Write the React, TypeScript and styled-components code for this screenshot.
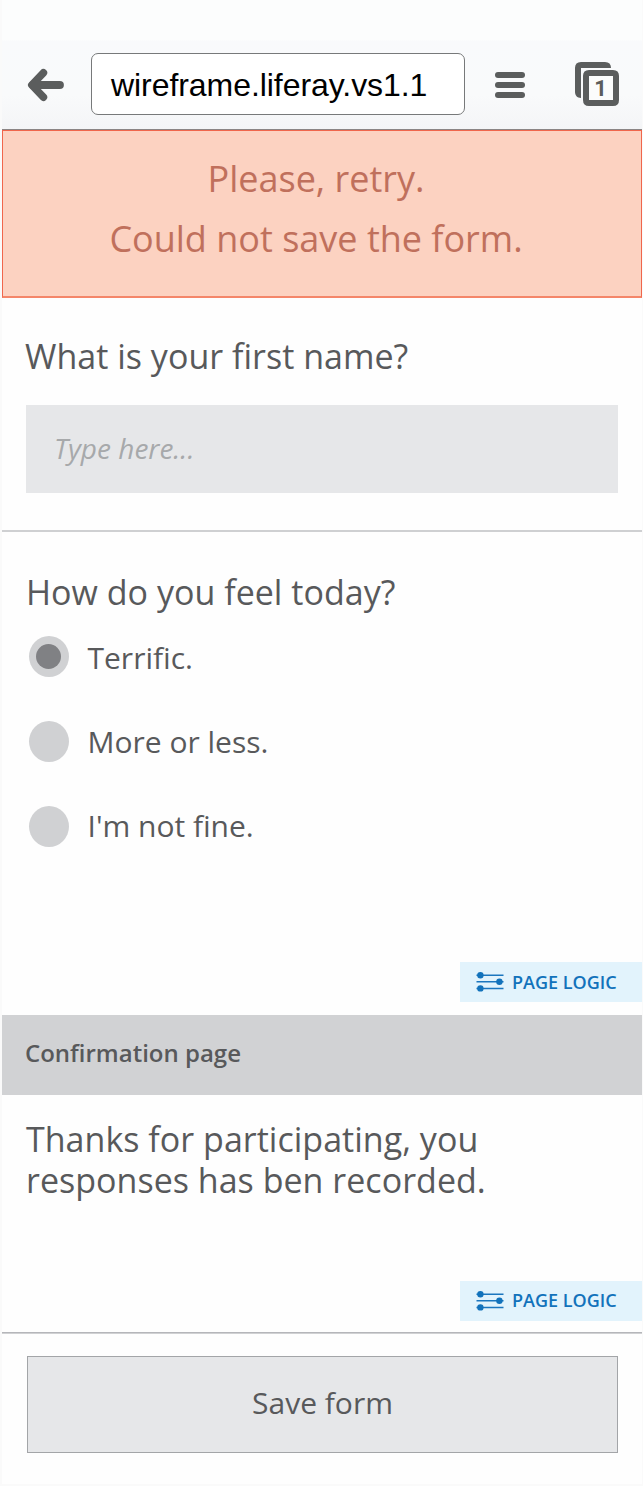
import React from "react";
import styled, { createGlobalStyle } from "styled-components";

const GlobalStyle = createGlobalStyle`
  * { box-sizing: border-box; }
  body { margin: 0; background: #fff; }
`;

const ink = "#58595b";
const icon = "#5b5d5d";

const Screen = styled.main`
  width: 643px;
  height: 1486px;
  padding: 0 1px 2px 2px;
  background: #fafafa;
  font-family: "Open Sans", sans-serif;
  color: ${ink};
`;

const Page = styled.div`
  display: flex;
  flex-direction: column;
  height: 1484px;
  background: #fefefe;
`;

const BrowserBar = styled.header`
  display: flex;
  align-items: flex-start;
  flex: none;
  height: 130px;
  padding: 53px 0 0 25px;
  border-bottom: 1px solid #8b8585;
  background: linear-gradient(#fcfdfd 0 40px, #f9fafc 41px, #f9fafb 95px, #f4f5f7 129px);
  svg { display: block; flex: none; }
`;

const AddressField = styled.div`
  flex: none;
  width: 374px;
  height: 62px;
  margin: 0 29px 0 24px;
  padding-left: 19px;
  border: 1px solid #77797a;
  border-radius: 7px;
  background: #fff;
  color: #000;
  font: 32px/62px "Liberation Sans", Arial, sans-serif;
  letter-spacing: -0.06px;
  white-space: nowrap;
`;

const Alert = styled.section`
  flex: none;
  height: 168px;
  padding: 18px 12px 0 0;
  border: 1px solid #f0664c;
  border-bottom: 2px solid #f4866a;
  background: #fcd2c1;
  color: #c0705c;
  font-size: 36px;
  line-height: 60px;
  text-align: center;
  p { margin: 0; }
`;

const Section = styled.section<{ $height: number; $left?: number }>`
  flex: none;
  height: ${(p) => p.$height}px;
  padding-left: ${(p) => p.$left ?? 24}px;
`;

const Question = styled.h2<{ $top: number }>`
  margin: 0;
  padding-top: ${(p) => p.$top}px;
  font-size: 34px;
  font-weight: 400;
  line-height: 41px;
  letter-spacing: 0.02px;
  white-space: nowrap;
`;

const TextField = styled.div`
  width: 592px;
  height: 88px;
  margin: 28px 0 0 1px;
  padding-left: 28px;
  background: #e6e7e9;
  color: #a7a9ab;
  font-size: 28px;
  font-style: italic;
  line-height: 86px;
`;

const Rule = styled.hr<{ $color: string }>`
  flex: none;
  width: 100%;
  height: 2px;
  margin: 0;
  border: 0;
  background: ${(p) => p.$color};
`;

const Options = styled.div`
  display: flex;
  gap: 18.5px;
  padding: 23px 0 0 3px;
`;

const Radios = styled.div`
  display: grid;
  grid-auto-rows: 85px;
`;

const Labels = styled.div`
  padding-top: 2px;
  font-size: 30px;
  line-height: 84px;
  margin-top: -22px;
`;

const Radio = styled.span`
  display: grid;
  place-items: center;
  width: 40px;
  height: 41px;
  border-radius: 50%;
  background: #d0d1d3;
`;

const Dot = styled.span`
  width: 25px;
  height: 25px;
  margin-right: 1px;
  border-radius: 50%;
  background: #808184;
`;

const TagRow = styled.div<{ $height: number }>`
  display: flex;
  justify-content: flex-end;
  align-items: flex-start;
  flex: none;
  height: ${(p) => p.$height}px;
`;

const Tag = styled.div<{ $shift: number }>`
  display: flex;
  width: 182px;
  height: 40px;
  padding-left: 16px;
  background: #e2f3fc;
  color: #1272bb;
  font-size: 18px;
  font-weight: 600;
  line-height: 40px;
  white-space: nowrap;
  svg { flex: none; margin-right: 7px; }
  span { margin-top: ${(p) => p.$shift}px; height: 40px; }
`;

const Band = styled.h3`
  flex: none;
  height: 80px;
  margin: 0;
  padding-left: 23px;
  background: #d1d2d4;
  font-size: 24px;
  font-weight: 600;
  line-height: 76px;
`;

const SaveButton = styled.button`
  flex: none;
  width: 591px;
  height: 97px;
  margin: 22px 0 0 25px;
  padding: 0 0 4px;
  border: 1px solid #a3a5a8;
  border-radius: 0;
  background: #e6e7e9;
  color: ${ink};
  font: 30px "Open Sans", sans-serif;
`;

function PageLogic({ shift }: { shift: number }) {
  return (
    <Tag $shift={shift}>
      <svg width="29" height="40" viewBox="0 0 29 40">
        <g stroke="#1b76be" strokeWidth="1.5">
          <path d="M.5 13.2H27.5M.5 19.8H27.5M.5 26.4H27.5" />
        </g>
        <g fill="#1272bb">
          <circle cx="4.4" cy="13.2" r="3.2" />
          <circle cx="23.4" cy="19.8" r="3.2" />
          <circle cx="4.4" cy="26.4" r="3.2" />
        </g>
      </svg>
      <span>PAGE LOGIC</span>
    </Tag>
  );
}

export default function App() {
  return (
    <>
      <GlobalStyle />
      <Screen>
        <Page>
          <BrowserBar>
            <svg width="40" height="62" viewBox="27 53 40 62">
              <g fill="none" stroke={icon} strokeLinecap="round" strokeLinejoin="round">
                <path d="M43.4 72.8L31.8 85L43.4 97.2" strokeWidth="7.6" />
                <path d="M33 85H59.8" strokeWidth="8.2" />
              </g>
            </svg>
            <AddressField>wireframe.liferay.vs1.1</AddressField>
            <svg width="126" height="62" viewBox="494 53 126 62">
              <g fill={icon}>
                <rect x="495" y="72" width="30" height="6" rx="3" />
                <rect x="495" y="82" width="30" height="6" rx="3" />
                <rect x="495" y="92" width="30" height="6" rx="3" />
                <path d="M581 98C577 98 575 95 575 92V68Q575 62 581 62H605Q611 62 611 68H581Z" />
                <path
                  fillRule="evenodd"
                  d="M589 70H613Q619 70 619 76V100Q619 106 613 106H589Q583 106 583 100V76Q583 70 589 70ZM589 76V100H613V76Z"
                />
                <rect x="589" y="76" width="24" height="24" fill="#fbfcfc" />
                <text x="600.5" y="96" textAnchor="middle" fontFamily="Roboto, sans-serif" fontSize="22" fontWeight="700">
                  1
                </text>
              </g>
            </svg>
          </BrowserBar>

          <Alert>
            <p>Please, retry.</p>
            <p>Could not save the form.</p>
          </Alert>

          <Section $height={232} $left={23}>
            <Question $top={38}>What is your first name?</Question>
            <TextField>Type here...</TextField>
          </Section>
          <Rule $color="#cfd0d2" />

          <Section $height={430}>
            <Question $top={40}>How do you feel today?</Question>
            <Options>
              <Radios>
                <Radio><Dot /></Radio>
                <Radio />
                <Radio />
              </Radios>
              <Labels>
                <div>Terrific.</div>
                <div>More or less.</div>
                <div>I'm not fine.</div>
              </Labels>
            </Options>
          </Section>
          <TagRow $height={53}>
            <PageLogic shift={0} />
          </TagRow>

          <Band>Confirmation page</Band>
          <Section $height={186}>
            <Question as="p" $top={24}>
              Thanks for participating, you
              <br />
              responses has ben recorded.
            </Question>
          </Section>
          <TagRow $height={51}>
            <PageLogic shift={-1} />
          </TagRow>
          <Rule $color="linear-gradient(#b5b6ba 50%, #d0d1d3 50%)" />
          <SaveButton>Save form</SaveButton>
        </Page>
      </Screen>
    </>
  );
}
